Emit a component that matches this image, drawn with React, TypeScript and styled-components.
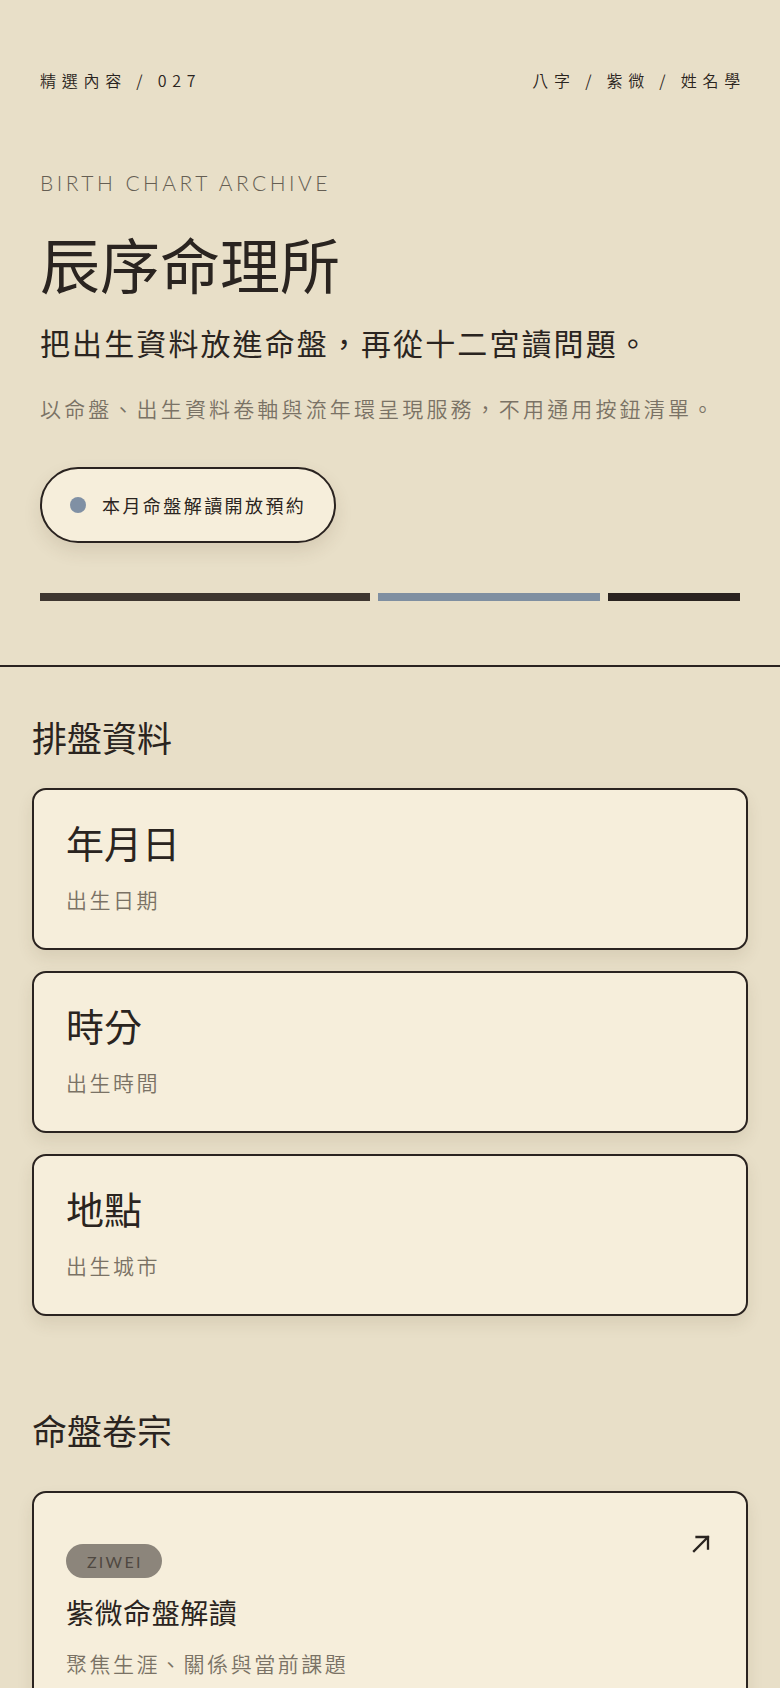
import React from "react";
import styled, { createGlobalStyle } from "styled-components";

const GlobalStyle = createGlobalStyle`
  * { box-sizing: border-box; }
  body {
    margin: 0;
    background: #e8dfc8;
    color: #2a2420;
    font-family: "Noto Sans CJK TC", "Noto Sans", sans-serif;
  }
`;

const fields = [
  { value: "年月日", label: "出生日期" },
  { value: "時分", label: "出生時間" },
  { value: "地點", label: "出生城市" },
];

const bars = [
  { flex: 2.5, color: "#3e3630" },
  { flex: 1.68, color: "#7f8fa1" },
  { flex: 1, color: "#2a2320" },
];

const ArrowIcon = () => (
  <svg width="18" height="18" viewBox="0 0 18 18" fill="none">
    <path
      d="M2 16 L16 2 M4.5 2 H16 V13.5"
      stroke="#2a2420"
      strokeWidth="2.3"
      strokeLinecap="square"
      strokeLinejoin="miter"
    />
  </svg>
);

const App = () => {
  return (
    <>
      <GlobalStyle />
      <Page>
        <Hero>
          <TopBar>
            <NavText>精選內容 / 027</NavText>
            <NavText>八字 / 紫微 / 姓名學</NavText>
          </TopBar>

          <Eyebrow>BIRTH CHART ARCHIVE</Eyebrow>
          <Title>辰序命理所</Title>
          <Subtitle>把出生資料放進命盤，再從十二宮讀問題。</Subtitle>
          <Lead>以命盤、出生資料卷軸與流年環呈現服務，不用通用按鈕清單。</Lead>

          <Notice>
            <Dot />
            本月命盤解讀開放預約
          </Notice>

          <Bars>
            {bars.map((b, i) => (
              <Bar key={i} $flex={b.flex} $color={b.color} />
            ))}
          </Bars>
        </Hero>

        <Section>
          <SectionTitle>排盤資料</SectionTitle>
          <FieldList>
            {fields.map((f) => (
              <FieldCard key={f.label}>
                <FieldValue>{f.value}</FieldValue>
                <Muted>{f.label}</Muted>
              </FieldCard>
            ))}
          </FieldList>
        </Section>

        <Section $gap={38}>
          <SectionTitle>命盤卷宗</SectionTitle>
          <ArchiveCard>
            <CardHead>
              <Tag>ZIWEI</Tag>
              <ArrowIcon />
            </CardHead>
            <ArchiveTitle>紫微命盤解讀</ArchiveTitle>
            <Muted>聚焦生涯、關係與當前課題</Muted>
            <Spacer />
          </ArchiveCard>
        </Section>
      </Page>
    </>
  );
};

export default App;

const Page = styled.div`
  width: 100%;
  min-height: 100vh;
  overflow: hidden;
`;

const Hero = styled.header`
  padding: 68px 40px 64px;
  border-bottom: 2px solid #2a2320;
  display: flex;
  flex-direction: column;
  align-items: flex-start;
`;

const TopBar = styled.div`
  width: 100%;
  display: flex;
  justify-content: space-between;
  align-items: center;
`;

const NavText = styled.div`
  font-size: 16px;
  line-height: 24px;
  font-weight: 350;
  letter-spacing: 0.36em;
  margin-right: -6px;
  color: #2a2420;
`;

const Eyebrow = styled.div`
  margin-top: 76px;
  font-family: Lato, "Liberation Sans", sans-serif;
  font-size: 21px;
  line-height: 30px;
  font-weight: 300;
  letter-spacing: 0.165em;
  color: #655e53;
`;

const Title = styled.h1`
  margin: 31px 0 0;
  font-size: 60px;
  line-height: 68px;
  font-weight: 400;
  color: #2a2420;
`;

const Subtitle = styled.p`
  margin: 24px 0 0;
  font-size: 30px;
  line-height: 42px;
  font-weight: 400;
  letter-spacing: 0.07em;
  color: #2a2420;
`;

const Lead = styled.p`
  margin: 28px 0 0;
  font-size: 21px;
  line-height: 34px;
  font-weight: 350;
  letter-spacing: 0.15em;
  color: #7a7265;
`;

const Notice = styled.div`
  margin-top: 42px;
  height: 76px;
  padding: 0 28px 0 28px;
  display: flex;
  align-items: center;
  gap: 16px;
  border: 2px solid #2a2320;
  border-radius: 40px;
  background: #f6eedb;
  box-shadow: 0 8px 18px rgba(80, 60, 30, 0.12);
  font-size: 18px;
  font-weight: 400;
  letter-spacing: 0.135em;
  color: #2a2420;
`;

const Dot = styled.span`
  width: 16px;
  height: 16px;
  border-radius: 50%;
  background: #8090a4;
  flex-shrink: 0;
`;

const Bars = styled.div`
  margin-top: 50px;
  width: 100%;
  display: flex;
  gap: 8px;
`;

const Bar = styled.div<{ $flex: number; $color: string }>`
  flex: ${(p) => p.$flex};
  height: 8px;
  background: ${(p) => p.$color};
`;

const Section = styled.section<{ $gap?: number }>`
  padding: 47px 32px 48px;
  display: flex;
  flex-direction: column;
  gap: ${(p) => p.$gap ?? 28}px;

  & + & {
    padding-top: 43px;
  }
`;

const SectionTitle = styled.h2`
  margin: 0;
  font-size: 35px;
  line-height: 46px;
  font-weight: 400;
  color: #2a2420;
`;

const FieldList = styled.div`
  display: flex;
  flex-direction: column;
  gap: 21px;
`;

const Card = styled.div`
  border: 2px solid #2a2320;
  border-radius: 14px;
  background: #f6eedb;
  box-shadow: 0 8px 16px rgba(80, 60, 30, 0.1);
`;

const FieldCard = styled(Card)`
  padding: 29px 32px 32px;
  display: flex;
  flex-direction: column;
  gap: 17px;
`;

const FieldValue = styled.div`
  font-size: 38px;
  line-height: 46px;
  font-weight: 400;
  color: #2a2420;
`;

const Muted = styled.div`
  font-size: 21px;
  line-height: 34px;
  font-weight: 350;
  letter-spacing: 0.12em;
  color: #7a7265;
`;

const ArchiveCard = styled(Card)`
  padding: 42px 32px 40px;
  display: flex;
  flex-direction: column;
  gap: 14px;
`;

const CardHead = styled.div`
  display: flex;
  justify-content: space-between;
  align-items: flex-start;
  padding-right: 4px;
  margin-bottom: 1px;
`;

const Tag = styled.span`
  margin-top: 9px;
  height: 34px;
  padding: 0 19px 0 21px;
  display: inline-flex;
  align-items: center;
  border-radius: 17px;
  background: #8c857b;
  font-family: Lato, "Liberation Sans", sans-serif;
  font-size: 16px;
  font-weight: 400;
  letter-spacing: 0.14em;
  color: #4f4841;
`;

const ArchiveTitle = styled.div`
  font-size: 28px;
  line-height: 39px;
  font-weight: 400;
  letter-spacing: 0.02em;
  color: #2a2420;
`;

const Spacer = styled.div`
  height: 60px;
`;
